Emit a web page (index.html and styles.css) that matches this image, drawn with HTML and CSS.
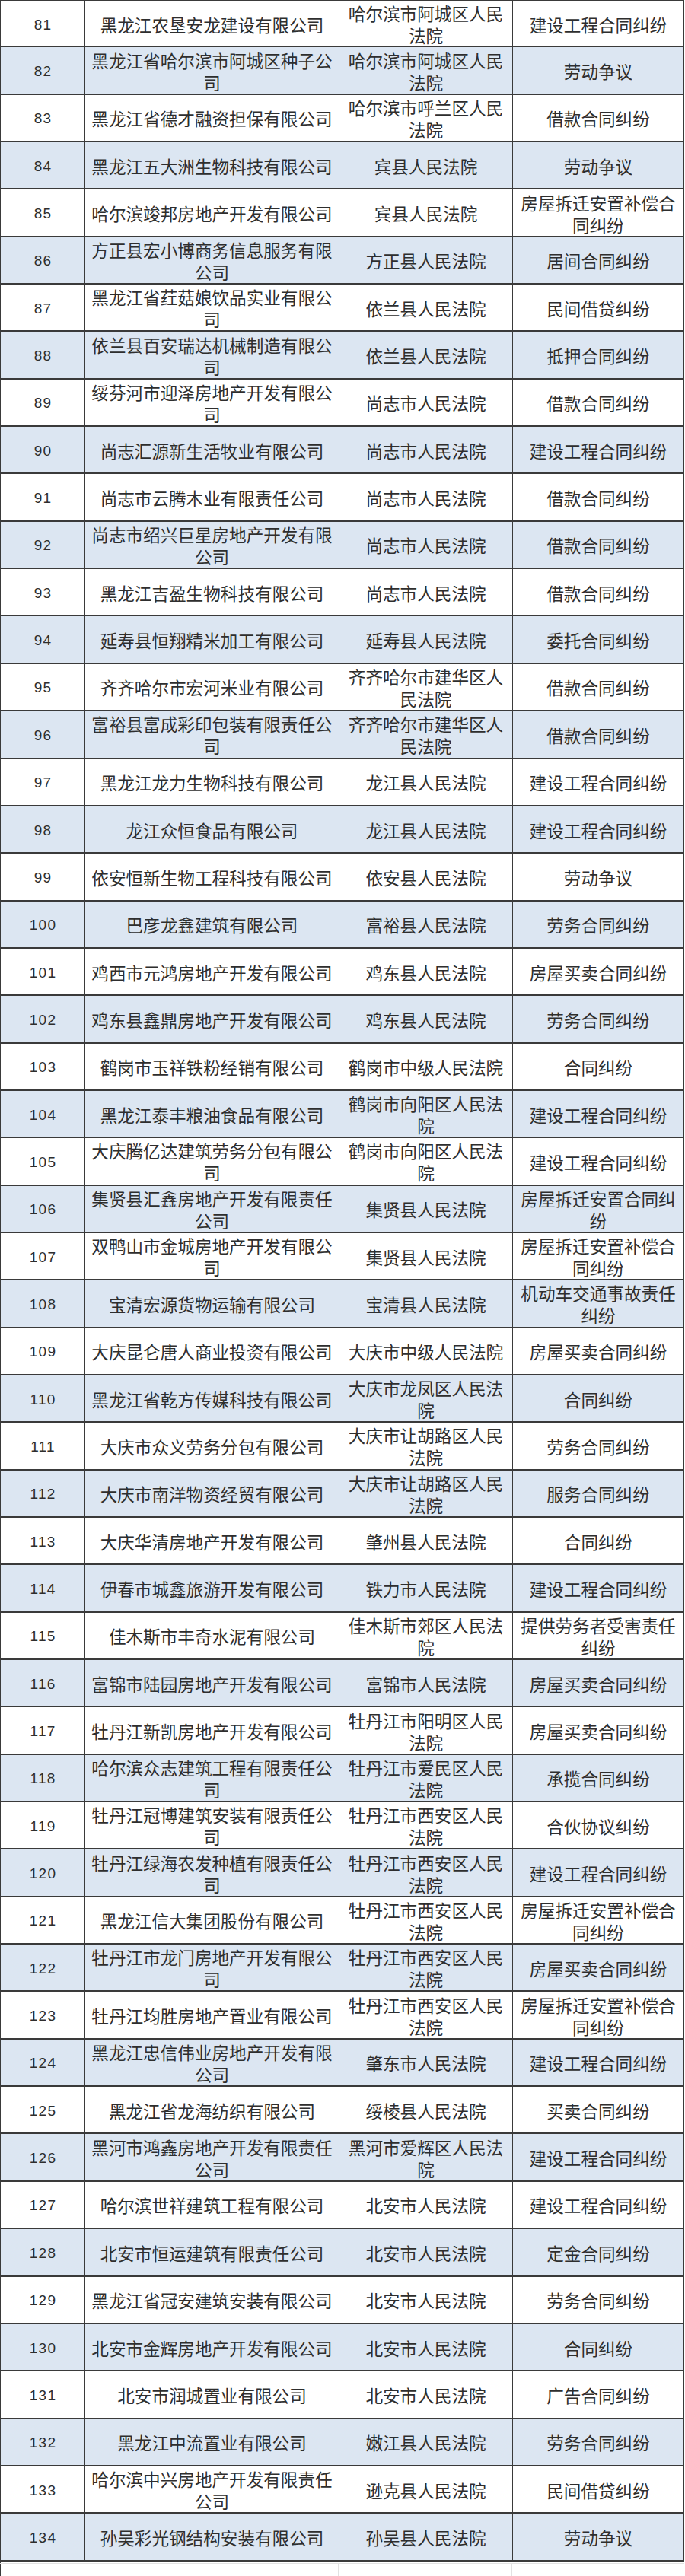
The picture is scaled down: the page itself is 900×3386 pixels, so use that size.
FILE: index.html
```html
<!DOCTYPE html>
<html lang="zh-CN">
<head>
<meta charset="utf-8">
<title>案件列表</title>
<link rel="stylesheet" href="styles.css">
</head>
<body>
<div class="sheet">
  <div class="row"><div class="c num">81</div><div class="c">黑龙江农垦安龙建设有限公司</div><div class="c">哈尔滨市阿城区人民法院</div><div class="c">建设工程合同纠纷</div></div>
  <div class="row"><div class="c num">82</div><div class="c">黑龙江省哈尔滨市阿城区种子公司</div><div class="c">哈尔滨市阿城区人民法院</div><div class="c">劳动争议</div></div>
  <div class="row"><div class="c num">83</div><div class="c">黑龙江省德才融资担保有限公司</div><div class="c">哈尔滨市呼兰区人民法院</div><div class="c">借款合同纠纷</div></div>
  <div class="row"><div class="c num">84</div><div class="c">黑龙江五大洲生物科技有限公司</div><div class="c">宾县人民法院</div><div class="c">劳动争议</div></div>
  <div class="row"><div class="c num">85</div><div class="c">哈尔滨竣邦房地产开发有限公司</div><div class="c">宾县人民法院</div><div class="c">房屋拆迁安置补偿合同纠纷</div></div>
  <div class="row"><div class="c num">86</div><div class="c">方正县宏小博商务信息服务有限公司</div><div class="c">方正县人民法院</div><div class="c">居间合同纠纷</div></div>
  <div class="row"><div class="c num">87</div><div class="c">黑龙江省荭菇娘饮品实业有限公司</div><div class="c">依兰县人民法院</div><div class="c">民间借贷纠纷</div></div>
  <div class="row"><div class="c num">88</div><div class="c">依兰县百安瑞达机械制造有限公司</div><div class="c">依兰县人民法院</div><div class="c">抵押合同纠纷</div></div>
  <div class="row"><div class="c num">89</div><div class="c">绥芬河市迎泽房地产开发有限公司</div><div class="c">尚志市人民法院</div><div class="c">借款合同纠纷</div></div>
  <div class="row"><div class="c num">90</div><div class="c">尚志汇源新生活牧业有限公司</div><div class="c">尚志市人民法院</div><div class="c">建设工程合同纠纷</div></div>
  <div class="row"><div class="c num">91</div><div class="c">尚志市云腾木业有限责任公司</div><div class="c">尚志市人民法院</div><div class="c">借款合同纠纷</div></div>
  <div class="row"><div class="c num">92</div><div class="c">尚志市绍兴巨星房地产开发有限公司</div><div class="c">尚志市人民法院</div><div class="c">借款合同纠纷</div></div>
  <div class="row"><div class="c num">93</div><div class="c">黑龙江吉盈生物科技有限公司</div><div class="c">尚志市人民法院</div><div class="c">借款合同纠纷</div></div>
  <div class="row"><div class="c num">94</div><div class="c">延寿县恒翔精米加工有限公司</div><div class="c">延寿县人民法院</div><div class="c">委托合同纠纷</div></div>
  <div class="row"><div class="c num">95</div><div class="c">齐齐哈尔市宏河米业有限公司</div><div class="c">齐齐哈尔市建华区人民法院</div><div class="c">借款合同纠纷</div></div>
  <div class="row"><div class="c num">96</div><div class="c">富裕县富成彩印包装有限责任公司</div><div class="c">齐齐哈尔市建华区人民法院</div><div class="c">借款合同纠纷</div></div>
  <div class="row"><div class="c num">97</div><div class="c">黑龙江龙力生物科技有限公司</div><div class="c">龙江县人民法院</div><div class="c">建设工程合同纠纷</div></div>
  <div class="row"><div class="c num">98</div><div class="c">龙江众恒食品有限公司</div><div class="c">龙江县人民法院</div><div class="c">建设工程合同纠纷</div></div>
  <div class="row"><div class="c num">99</div><div class="c">依安恒新生物工程科技有限公司</div><div class="c">依安县人民法院</div><div class="c">劳动争议</div></div>
  <div class="row"><div class="c num">100</div><div class="c">巴彦龙鑫建筑有限公司</div><div class="c">富裕县人民法院</div><div class="c">劳务合同纠纷</div></div>
  <div class="row"><div class="c num">101</div><div class="c">鸡西市元鸿房地产开发有限公司</div><div class="c">鸡东县人民法院</div><div class="c">房屋买卖合同纠纷</div></div>
  <div class="row"><div class="c num">102</div><div class="c">鸡东县鑫鼎房地产开发有限公司</div><div class="c">鸡东县人民法院</div><div class="c">劳务合同纠纷</div></div>
  <div class="row"><div class="c num">103</div><div class="c">鹤岗市玉祥铁粉经销有限公司</div><div class="c">鹤岗市中级人民法院</div><div class="c">合同纠纷</div></div>
  <div class="row"><div class="c num">104</div><div class="c">黑龙江泰丰粮油食品有限公司</div><div class="c">鹤岗市向阳区人民法院</div><div class="c">建设工程合同纠纷</div></div>
  <div class="row"><div class="c num">105</div><div class="c">大庆腾亿达建筑劳务分包有限公司</div><div class="c">鹤岗市向阳区人民法院</div><div class="c">建设工程合同纠纷</div></div>
  <div class="row"><div class="c num">106</div><div class="c">集贤县汇鑫房地产开发有限责任公司</div><div class="c">集贤县人民法院</div><div class="c">房屋拆迁安置合同纠纷</div></div>
  <div class="row"><div class="c num">107</div><div class="c">双鸭山市金城房地产开发有限公司</div><div class="c">集贤县人民法院</div><div class="c">房屋拆迁安置补偿合同纠纷</div></div>
  <div class="row"><div class="c num">108</div><div class="c">宝清宏源货物运输有限公司</div><div class="c">宝清县人民法院</div><div class="c">机动车交通事故责任纠纷</div></div>
  <div class="row"><div class="c num">109</div><div class="c">大庆昆仑唐人商业投资有限公司</div><div class="c">大庆市中级人民法院</div><div class="c">房屋买卖合同纠纷</div></div>
  <div class="row"><div class="c num">110</div><div class="c">黑龙江省乾方传媒科技有限公司</div><div class="c">大庆市龙凤区人民法院</div><div class="c">合同纠纷</div></div>
  <div class="row"><div class="c num">111</div><div class="c">大庆市众义劳务分包有限公司</div><div class="c">大庆市让胡路区人民法院</div><div class="c">劳务合同纠纷</div></div>
  <div class="row"><div class="c num">112</div><div class="c">大庆市南洋物资经贸有限公司</div><div class="c">大庆市让胡路区人民法院</div><div class="c">服务合同纠纷</div></div>
  <div class="row"><div class="c num">113</div><div class="c">大庆华清房地产开发有限公司</div><div class="c">肇州县人民法院</div><div class="c">合同纠纷</div></div>
  <div class="row"><div class="c num">114</div><div class="c">伊春市城鑫旅游开发有限公司</div><div class="c">铁力市人民法院</div><div class="c">建设工程合同纠纷</div></div>
  <div class="row"><div class="c num">115</div><div class="c">佳木斯市丰奇水泥有限公司</div><div class="c">佳木斯市郊区人民法院</div><div class="c">提供劳务者受害责任纠纷</div></div>
  <div class="row"><div class="c num">116</div><div class="c">富锦市陆园房地产开发有限公司</div><div class="c">富锦市人民法院</div><div class="c">房屋买卖合同纠纷</div></div>
  <div class="row"><div class="c num">117</div><div class="c">牡丹江新凯房地产开发有限公司</div><div class="c">牡丹江市阳明区人民法院</div><div class="c">房屋买卖合同纠纷</div></div>
  <div class="row"><div class="c num">118</div><div class="c">哈尔滨众志建筑工程有限责任公司</div><div class="c">牡丹江市爱民区人民法院</div><div class="c">承揽合同纠纷</div></div>
  <div class="row"><div class="c num">119</div><div class="c">牡丹江冠博建筑安装有限责任公司</div><div class="c">牡丹江市西安区人民法院</div><div class="c">合伙协议纠纷</div></div>
  <div class="row"><div class="c num">120</div><div class="c">牡丹江绿海农发种植有限责任公司</div><div class="c">牡丹江市西安区人民法院</div><div class="c">建设工程合同纠纷</div></div>
  <div class="row"><div class="c num">121</div><div class="c">黑龙江信大集团股份有限公司</div><div class="c">牡丹江市西安区人民法院</div><div class="c">房屋拆迁安置补偿合同纠纷</div></div>
  <div class="row"><div class="c num">122</div><div class="c">牡丹江市龙门房地产开发有限公司</div><div class="c">牡丹江市西安区人民法院</div><div class="c">房屋买卖合同纠纷</div></div>
  <div class="row"><div class="c num">123</div><div class="c">牡丹江均胜房地产置业有限公司</div><div class="c">牡丹江市西安区人民法院</div><div class="c">房屋拆迁安置补偿合同纠纷</div></div>
  <div class="row"><div class="c num">124</div><div class="c">黑龙江忠信伟业房地产开发有限公司</div><div class="c">肇东市人民法院</div><div class="c">建设工程合同纠纷</div></div>
  <div class="row"><div class="c num">125</div><div class="c">黑龙江省龙海纺织有限公司</div><div class="c">绥棱县人民法院</div><div class="c">买卖合同纠纷</div></div>
  <div class="row"><div class="c num">126</div><div class="c">黑河市鸿鑫房地产开发有限责任公司</div><div class="c">黑河市爱辉区人民法院</div><div class="c">建设工程合同纠纷</div></div>
  <div class="row"><div class="c num">127</div><div class="c">哈尔滨世祥建筑工程有限公司</div><div class="c">北安市人民法院</div><div class="c">建设工程合同纠纷</div></div>
  <div class="row"><div class="c num">128</div><div class="c">北安市恒运建筑有限责任公司</div><div class="c">北安市人民法院</div><div class="c">定金合同纠纷</div></div>
  <div class="row"><div class="c num">129</div><div class="c">黑龙江省冠安建筑安装有限公司</div><div class="c">北安市人民法院</div><div class="c">劳务合同纠纷</div></div>
  <div class="row"><div class="c num">130</div><div class="c">北安市金辉房地产开发有限公司</div><div class="c">北安市人民法院</div><div class="c">合同纠纷</div></div>
  <div class="row"><div class="c num">131</div><div class="c">北安市润城置业有限公司</div><div class="c">北安市人民法院</div><div class="c">广告合同纠纷</div></div>
  <div class="row"><div class="c num">132</div><div class="c">黑龙江中流置业有限公司</div><div class="c">嫩江县人民法院</div><div class="c">劳务合同纠纷</div></div>
  <div class="row"><div class="c num">133</div><div class="c">哈尔滨中兴房地产开发有限责任公司</div><div class="c">逊克县人民法院</div><div class="c">民间借贷纠纷</div></div>
  <div class="row"><div class="c num">134</div><div class="c">孙吴彩光钢结构安装有限公司</div><div class="c">孙吴县人民法院</div><div class="c">劳动争议</div></div>
  <div class="ghost"><div class="g"></div><div class="g"></div><div class="g"></div><div class="g"></div></div>
</div>
</body>
</html>
```

FILE: styles.css
```css
html, body {
  margin: 0;
  padding: 0;
  background: #ffffff;
}

.sheet {
  width: 899px;
  border-left: 1px solid #3a3a3a;
  box-sizing: border-box;
  font-family: "Noto Sans CJK SC", "Noto Sans CJK TC", sans-serif;
  color: #2e2e2e;
  font-size: 22.6px;
  line-height: 29px;
}

.row {
  display: grid;
  grid-template-columns: 111px 334px 228px 225px;
  height: 62.35px;
  box-sizing: border-box;
  border-bottom: 2px solid #3a3a3a;
  background: #ffffff;
}

.row:first-child {
  border-top: 1px solid #3a3a3a;
}

.row:nth-child(even) {
  background: #dce6f2;
}

.c {
  display: flex;
  align-items: center;
  justify-content: center;
  text-align: center;
  box-sizing: border-box;
  padding: 2px 5px 0;
  border-right: 1px solid #3a3a3a;
}

.num {
  font-family: "Liberation Sans", Arial, sans-serif;
  font-size: 19px;
  letter-spacing: 1.2px;
  padding-left: 6px;
}

.ghost {
  display: grid;
  grid-template-columns: 111px 334px 228px 225px;
  height: 16px;
  margin-left: -1px;
  margin-top: 2px;
  border-top: 1px solid #e2e2e2;
}

.g {
  border-right: 1px solid #e2e2e2;
}
```
